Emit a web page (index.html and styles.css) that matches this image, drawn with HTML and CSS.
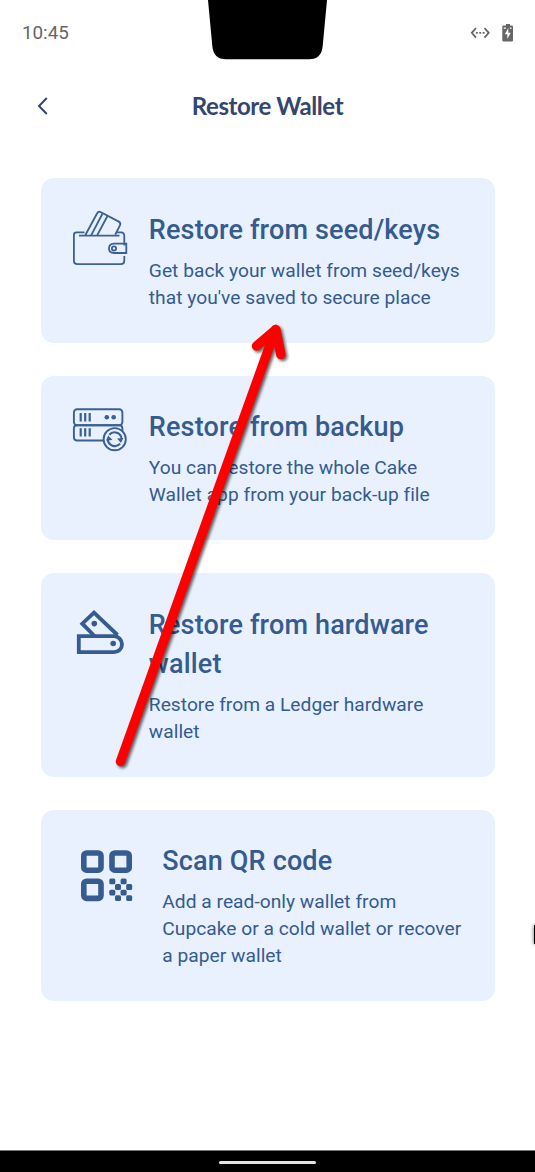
FILE: index.html
```html
<!DOCTYPE html>
<html lang="en">
<head>
<meta charset="utf-8">
<title>Restore Wallet</title>
<link rel="stylesheet" href="styles.css">
</head>
<body>
<div class="screen">
  <header class="status">
    <span class="time">10:45</span>
    <svg class="notch" width="120" height="60" viewBox="0 0 120 60"><path d="M1 0H120L115.700 46Q114.500 59.300 102 59.300H19Q6.500 59.300 5.300 46Z" fill="#000"/></svg>
    <svg class="status-icons" width="46" height="22" viewBox="0 0 46 22" fill="none" stroke="#666" stroke-width="1.800">
      <path d="M6 6L1.800 10.800L6 15.600M14.500 6L18.700 10.800L14.500 15.600"/>
      <path d="M5.900 10.800H14.800" stroke-dasharray="1.900 1.500"/>
      <path d="M34.300 3.500H36V2H40V3.500H41.700Q43 3.500 43 4.800V18.200Q43 19.500 41.700 19.500H33.600Q32.300 19.500 32.300 18.200V4.800Q32.300 3.500 33.600 3.500Z" fill="#666" stroke="none"/>
      <path d="M38.300 6L34.800 12.300H37.300V17L40.700 10.800H38.300ZM33.800 5.500H36V6.700H33.800ZM39.800 5.500H41.500V6.700H39.800Z" fill="#fff" stroke="none"/>
    </svg>
  </header>
  <nav class="nav">
    <svg class="back" width="14" height="20" viewBox="0 0 14 20"><path d="M10.800 2L3 10L10.800 18" fill="none" stroke="#34466f" stroke-width="2"/></svg>
    <h1 class="page-title">Restore Wallet</h1>
  </nav>
  <main class="options">
    <section class="card">
      <svg class="icon" width="56" height="56" viewBox="0 0 56 56" fill="none" stroke="#3a6097" stroke-width="1.800">
        <path d="M12.500 22.300H4.500Q1.900 22.300 1.900 25V50.500Q1.900 54.200 5.600 54.200H48.600Q52.300 54.200 52.300 50.500V46M52.300 35.500V26Q52.300 22.300 49 22.300H45"/>
        <path d="M7 25.700H47.500M13 25.700L25 3.500Q26.300 .800 29 2.200L46.800 11.600Q49.200 13 47.900 15.400L43.300 24.500M19 25.700L30.300 4M25 25.700L35.200 6.500M54.300 33.700H42Q37 34 37 38.500Q37 43 42 43H54.300Z"/>
        <circle cx="42" cy="38.400" r="2.100"/>
      </svg>
      <div class="copy"><h2>Restore from seed/keys</h2><p>Get back your wallet from seed/keys<br>that you've saved to secure place</p></div>
    </section>
    <section class="card">
      <svg class="icon" width="56" height="56" viewBox="0 0 56 56" fill="none" stroke="#3a6097" stroke-width="1.900">
        <rect x="1.900" y="1.200" width="48.500" height="16" rx="3.200"/>
        <path d="M31 32.500H5Q1.900 32.500 1.900 29.300V20.500Q1.900 17.200 5 17.200H47.300Q50.400 17.200 50.400 20.500V23"/>
        <path d="M8.700 5V13.500M13.200 5V13.500M17.700 5V13.500M8.700 20.200V28.500M13.200 20.200V28.500M17.700 20.200V28.500" stroke-width="2.200"/>
        <circle cx="34.800" cy="9.200" r="2.300" fill="#3a6097" stroke="none"/><circle cx="41.700" cy="9.200" r="2.300" fill="#3a6097" stroke="none"/>
        <circle cx="42.700" cy="31.200" r="11.100" fill="#e8f1fd"/>
        <path d="M49.600 31A7 7 0 0 0 37.300 26.800M35.800 31.400A7 7 0 0 0 48.100 35.600" stroke-width="2.100"/>
        <path d="M34 32.500L36.200 27.500L40.500 32ZM45 30.500L51.400 30L49 35Z" fill="#3a6097" stroke="none"/>
      </svg>
      <div class="copy"><h2>Restore from backup</h2><p>You can restore the whole Cake<br>Wallet app from your back-up file</p></div>
    </section>
    <section class="card">
      <svg class="icon" width="56" height="56" viewBox="0 0 56 56" fill="none" stroke="#355b90" stroke-width="3.800">
        <path d="M6.800 31.200H42A8 8 0 0 1 42 47.200H6.800Z"/>
        <path d="M22.500 31L10.300 18.700L22 7.700L45.500 30"/>
        <circle cx="22.300" cy="18.600" r="2.800" fill="#355b90" stroke="none"/><circle cx="41.200" cy="38.500" r="2.800" fill="#355b90" stroke="none"/>
      </svg>
      <div class="copy"><h2>Restore from hardware<br>wallet</h2><p>Restore from a Ledger hardware<br>wallet</p></div>
    </section>
    <section class="card card-qr">
      <svg class="icon" width="56" height="56" viewBox="0 0 56 56" fill="none" stroke="#355b90" stroke-width="5.600">
        <rect x="3.800" y="3" width="17.200" height="17.200" rx="2.800"/><rect x="32" y="3" width="17.200" height="17.200" rx="2.800"/><rect x="3.800" y="31.200" width="17.200" height="17.200" rx="2.800"/>
        <g fill="#355b90" stroke="none"><rect x="29.300" y="28.500" width="6" height="5.800" rx="1.500"/><rect x="40.600" y="28.500" width="6" height="5.800" rx="1.500"/><rect x="35" y="34.100" width="6" height="5.800" rx="1.500"/><rect x="46.200" y="34.100" width="6" height="5.800" rx="1.500"/><rect x="29.300" y="39.700" width="6" height="5.800" rx="1.500"/><rect x="40.600" y="39.700" width="6" height="5.800" rx="1.500"/><rect x="35" y="45.300" width="6" height="5.800" rx="1.500"/><rect x="46.200" y="45.300" width="6" height="5.800" rx="1.500"/></g>
      </svg>
      <div class="copy"><h2>Scan QR code</h2><p>Add a read-only wallet from<br>Cupcake or a cold wallet or recover<br>a paper wallet</p></div>
    </section>
  </main>
  <footer class="gesture"><span class="handle"></span></footer>
  <svg class="arrow" width="535" height="1172" viewBox="0 0 535 1172"><path d="M120.500 761.500L275.500 329.500M256.500 346L275.800 329.500L280.800 354.500" fill="none" stroke="#f00" stroke-width="9.500" stroke-linecap="round" stroke-linejoin="round"/></svg>
  <span class="edge-tab"></span>
</div>
</body>
</html>
```
FILE: styles.css
```css
* { box-sizing: border-box; }
body { margin: 0; background: #fff; font-family: Roboto, sans-serif; }
.screen { position: relative; width: 535px; height: 1172px; overflow: hidden; display: flex; flex-direction: column; }
.status { height: 66px; display: flex; justify-content: space-between; align-items: center; padding: 0 19px 0 22px; }
.time { width: 46px; font-size: 18.8px; color: #666; white-space: nowrap; }
.notch { position: absolute; left: 207px; top: 0; }
.status-icons { display: block; }
.nav { height: 80px; display: grid; grid-template-columns: 40px 1fr 40px; align-items: center; padding: 0 35px; }
.back { margin: -1px 0 0 1px; }
.page-title { margin: 0; text-align: center; font: 700 24px/30px Lato, sans-serif; letter-spacing: -.42px; color: #34466f; }
.options { display: flex; flex-direction: column; gap: 33px; padding: 32.300px 40.500px 0; }
.card { display: flex; gap: 21px; padding: 32.600px 32px 31.800px; border-radius: 13px; background: #e8f1fd; color: #355b90; }
.icon { flex: none; display: block; margin: -.5px 0 0 -.7px; }
.card-qr { padding-left: 40px; gap: 26.500px; }
.card-qr .icon { margin-top: 7.500px; }
.copy { min-width: 0; white-space: nowrap; }
h2 { margin: 0 0 6.800px; font-size: 27px; line-height: 39.200px; font-weight: 500; letter-spacing: .16px; }
p { margin: 0; font-size: 19.2px; line-height: 27px; letter-spacing: .02px; }
.gesture { margin-top: auto; height: 22px; border-top: 1px solid #777; background: #000; display: flex; justify-content: center; align-items: flex-start; padding-top: 10px; }
.handle { width: 97px; height: 3px; border-radius: 2px; background: #e3e3e3; }
.arrow { position: absolute; inset: 0; filter: drop-shadow(2px 2px 1.500px rgba(0,0,0,.6)); }
.edge-tab { position: absolute; left: 534px; top: 925px; width: 6px; height: 19px; background: #000; box-shadow: 0 0 4px rgba(0,0,0,.6); }
```
